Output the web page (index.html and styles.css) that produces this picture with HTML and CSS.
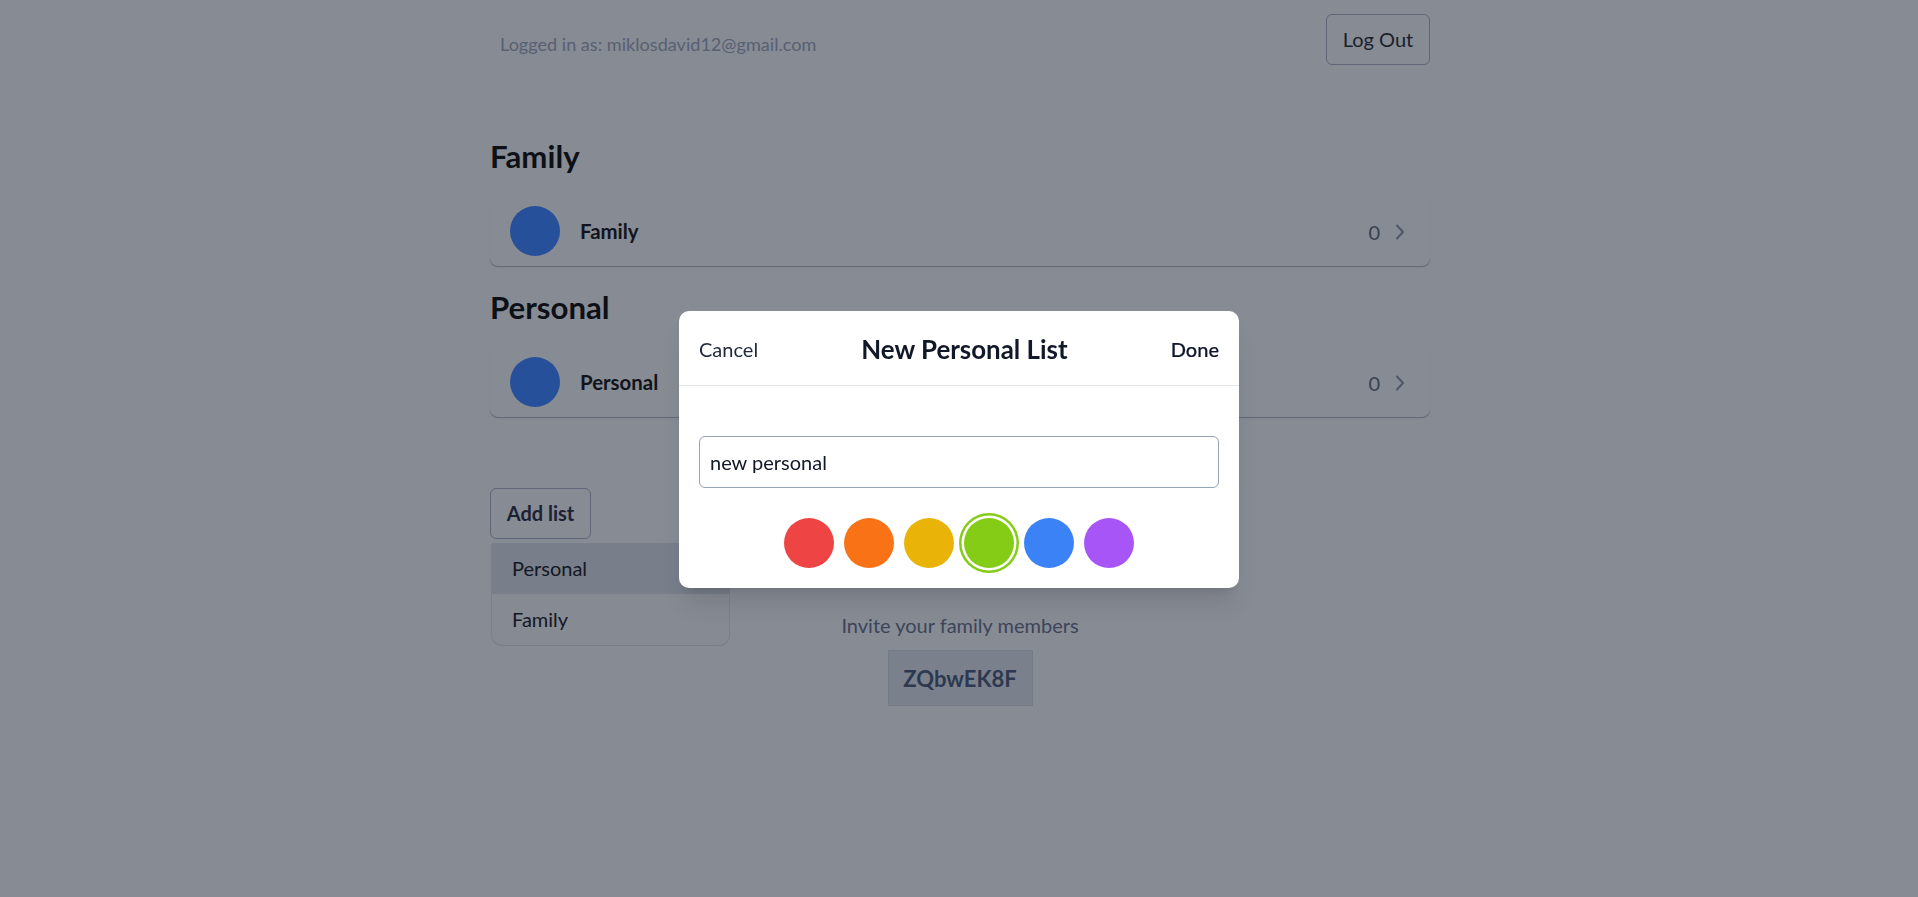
FILE: index.html
```html
<!DOCTYPE html>
<html lang="en">
<head>
<meta charset="utf-8">
<title>Lists</title>
<link rel="stylesheet" href="styles.css">
</head>
<body>
<div class="page">
  <header class="topbar">
    <span class="user">Logged in as: miklosdavid12@gmail.com</span>
    <button class="btn-outline logout">Log Out</button>
  </header>

  <main>
    <section class="group group-first">
      <h2 class="group-title">Family</h2>
      <div class="list-card">
        <span class="dot dot-blue"></span>
        <span class="list-name">Family</span>
        <span class="list-count">0</span>
        <svg class="chev" width="10" height="16" viewBox="0 0 10 16"><polyline points="2,1.5 8,8 2,14.5" fill="none" stroke="currentColor" stroke-width="2" stroke-linecap="round" stroke-linejoin="round"/></svg>
      </div>
    </section>

    <section class="group">
      <h2 class="group-title">Personal</h2>
      <div class="list-card">
        <span class="dot dot-blue"></span>
        <span class="list-name">Personal</span>
        <span class="list-count">0</span>
        <svg class="chev" width="10" height="16" viewBox="0 0 10 16"><polyline points="2,1.5 8,8 2,14.5" fill="none" stroke="currentColor" stroke-width="2" stroke-linecap="round" stroke-linejoin="round"/></svg>
      </div>
    </section>

    <div class="add-wrap">
      <button class="btn-outline add-btn">Add list</button>
      <ul class="menu">
        <li class="menu-item active">Personal</li>
        <li class="menu-item">Family</li>
      </ul>
    </div>

    <div class="invite">
      <p class="invite-text">Invite your family members</p>
      <div class="code">ZQbwEK8F</div>
    </div>
  </main>
</div>

<div class="overlay">
  <div class="modal">
    <div class="modal-head">
      <span class="m-cancel">Cancel</span>
      <span class="m-title">New Personal List</span>
      <span class="m-done">Done</span>
    </div>
    <div class="modal-body">
      <input class="name-input" type="text" value="new personal">
      <div class="swatches">
        <span class="swatch sw-red"></span>
        <span class="swatch sw-orange"></span>
        <span class="swatch sw-yellow"></span>
        <span class="swatch sw-green selected"></span>
        <span class="swatch sw-blue"></span>
        <span class="swatch sw-purple"></span>
      </div>
    </div>
  </div>
</div>
</body>
</html>
```
FILE: styles.css
```css
* { box-sizing: border-box; }

html, body {
  margin: 0;
  padding: 0;
}

body {
  background: #878b94;
  font-family: "Lato", "Liberation Sans", sans-serif;
  color: #12151d;
  min-height: 897px;
  overflow: hidden;
}

.page {
  width: 942px;
  padding-left: 2px;
  margin: 0 auto;
}

/* top bar */
.topbar {
  display: flex;
  justify-content: space-between;
  align-items: flex-start;
  padding-top: 14px;
}

.user {
  margin-top: 18px;
  padding-left: 10px;
  font-size: 18.1px;
  line-height: 25px;
  color: #586072;
}

.btn-outline {
  font-family: inherit;
  background: transparent;
  border: 1px solid #5f6677;
  border-radius: 6px;
  padding: 10px 16px;
  font-size: 20px;
  line-height: 29px;
  margin: 0;
  cursor: pointer;
}

.logout {
  color: #1a1f2c;
  font-weight: 400;
  width: 104px;
  padding: 10px 0;
}

/* groups */
.group { margin-top: 21px; }
.group-first { margin-top: 71px; }

.group-title {
  margin: 0 0 20px;
  font-size: 31.2px;
  line-height: 40px;
  font-weight: 700;
  color: #0d1016;
}

.list-card {
  display: flex;
  align-items: center;
  height: 70px;
  padding: 0 25px 0 20px;
  border-radius: 8px;
  box-shadow: 0 1px 0 #626978, 0 2px 2px -1px rgba(50, 56, 70, 0.15);
}

.dot {
  width: 50px;
  height: 50px;
  border-radius: 50%;
  flex: none;
}
.dot-blue { background: #27509a; }

.list-name {
  margin-left: 20px;
  font-size: 20.4px;
  font-weight: 700;
  color: #11141c;
  flex: 1;
}

.list-count {
  font-size: 20px;
  color: #384154;
  margin-top: 1px;
}

.chev {
  margin-left: 15px;
  color: #4e576a;
  margin-top: 1px;
}

/* add list */
.add-wrap {
  position: relative;
  margin-top: 71px;
}

.add-btn {
  width: 101px;
  padding: 10px 0;
  font-weight: 700;
  color: #1b2234;
}

.menu {
  position: absolute;
  left: 1px;
  top: 55px;
  width: 239px;
  margin: 0;
  padding: 0;
  list-style: none;
  border: 1px solid rgba(98, 104, 118, 0.3);
  border-top: none;
  border-radius: 2px 2px 11px 11px;
  background: #868a93;
}

.menu-item {
  height: 51px;
  line-height: 51px;
  padding: 0 20px;
  font-size: 20px;
  color: #141823;
}
.menu-item.active { background: #787e8a; }

/* invite */
.invite {
  display: flex;
  flex-direction: column;
  align-items: center;
  margin-top: 71px;
}

.invite-text {
  margin: 0;
  font-size: 20px;
  line-height: 30px;
  color: #3c4558;
}

.code {
  margin-top: 10px;
  width: 145px;
  padding: 12px 0 11px;
  text-align: center;
  font-size: 22px;
  line-height: 31px;
  font-weight: 700;
  color: #2d3950;
  background: #7b818c;
  border: 1px solid #747a86;
}

/* modal */
.overlay {
  position: fixed;
  inset: 0;
  display: flex;
  align-items: center;
  justify-content: center;
  padding-top: 2px;
}

.modal {
  width: 560px;
  background: #ffffff;
  border-radius: 10px;
  box-shadow: 0 20px 25px -5px rgba(0, 0, 0, 0.1), 0 8px 10px -6px rgba(0, 0, 0, 0.1);
}

.modal-head {
  height: 75px;
  display: flex;
  align-items: center;
  justify-content: space-between;
  padding: 2px 20px 0;
  border-bottom: 1px solid #e5e7eb;
}

.m-cancel {
  font-size: 20px;
  color: #1f2937;
}

.m-title {
  font-size: 25.9px;
  font-weight: 700;
  color: #111827;
}

.m-done {
  font-size: 20px;
  font-weight: 500;
  color: #0f172a;
  -webkit-text-stroke: 0.2px #0f172a;
}

.modal-body {
  padding: 50px 20px 20px;
}

.name-input {
  display: block;
  width: 100%;
  height: 52px;
  margin: 0;
  padding: 0 10px;
  font-family: inherit;
  font-size: 20px;
  color: #111827;
  border: 1px solid #94a3b8;
  border-radius: 6px;
  background: #fff;
  outline: none;
}

.swatches {
  display: flex;
  justify-content: center;
  gap: 10px;
  margin-top: 30px;
}

.swatch {
  width: 50px;
  height: 50px;
  border-radius: 50%;
}
.sw-red { background: #ef4444; }
.sw-orange { background: #f97316; }
.sw-yellow { background: #eab308; }
.sw-green { background: #84cc16; }
.sw-blue { background: #3b82f6; }
.sw-purple { background: #a855f7; }

.swatch.selected {
  box-shadow: 0 0 0 2.5px #ffffff, 0 0 0 5px #84cc16;
}
```
